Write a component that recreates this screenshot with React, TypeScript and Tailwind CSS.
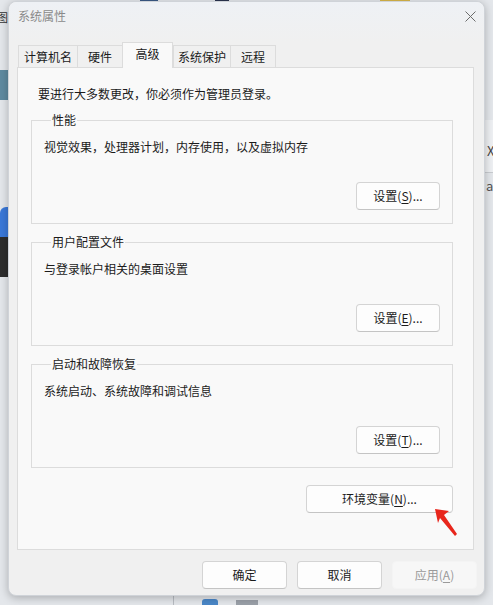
import type { ReactNode } from "react";

const font = {
  fontFamily: '"Noto Sans CJK SC", "Noto Sans", sans-serif',
};

const tabs = [
  { label: "计算机名", w: "w-[60px]" },
  { label: "硬件", w: "w-[46px]" },
  { label: "高级", w: "w-[51px]", active: true },
  { label: "系统保护", w: "w-[58px]" },
  { label: "远程", w: "w-[46px]" },
];

function Key({ k }: { k: string }) {
  return (
    <>
      (<span className="underline underline-offset-2">{k}</span>)
    </>
  );
}

function Btn({
  children,
  className = "",
  disabled = false,
}: {
  children: ReactNode;
  className?: string;
  disabled?: boolean;
}) {
  return (
    <button
      className={
        "h-[28px] rounded-[4px] text-[12px] leading-none " +
        (disabled
          ? "border border-[#f4f4f4] bg-[#f7f7f7] text-[#9a9a9a] "
          : "border border-[#d4d4d4] border-b-[#c4c4c4] bg-[#fdfdfd] text-[#1b1b1b] ") +
        className
      }
    >
      {children}
    </button>
  );
}

function Group({
  title,
  desc,
  children,
}: {
  title: string;
  desc: string;
  children: ReactNode;
}) {
  return (
    <fieldset className="ml-[13px] mr-[20px] h-[112px] border border-[#dcdcdc] pl-[12px] pr-[12px]">
      <legend className="ml-[7px] px-[1px] text-[12px] leading-[16px] text-[#1b1b1b]">
        {title}
      </legend>
      <p className="mt-[11px] text-[12px] leading-[16px] text-[#1b1b1b]">{desc}</p>
      <div className="mt-[27px] flex justify-end">{children}</div>
    </fieldset>
  );
}

export default function App() {
  return (
    <div
      className="relative h-[605px] w-[493px] overflow-hidden bg-[#e4e7eb]"
      style={font}
    >
      {/* desktop bits peeking out around the window */}
      <div className="absolute left-[140px] top-0 h-[4px] w-[18px] bg-[#3b5a86]" />
      <div className="absolute left-[215px] top-0 h-[4px] w-[14px] bg-[#2c3550]" />
      <div className="absolute left-[380px] top-0 h-[4px] w-[30px] bg-[#d9b64a]" />
      <div className="absolute left-0 top-[70px] h-[30px] w-[8px] bg-[#5f8aa0]" />
      <div className="absolute left-0 top-[207px] h-[30px] w-[8px] rounded-tl-[6px] bg-[#3a78d8]" />
      <div className="absolute left-0 top-[237px] h-[40px] w-[8px] bg-[#2d2d2d]" />
      <span className="absolute left-[-3px] top-[9px] text-[11px] text-[#333]">图</span>
      <div className="absolute left-[485px] top-[120px] h-[52px] w-[8px] bg-[#eef0f3]" />
      <div className="absolute left-[485px] top-[172px] h-px w-[8px] bg-[#c9ccd0]" />
      <span className="absolute left-[487px] top-[141px] text-[13px] text-[#444]">X</span>
      <span className="absolute left-[486px] top-[176px] text-[13px] text-[#555]">ac</span>
      <div className="absolute left-[173px] top-[596px] h-[10px] w-px bg-[#b8bcc2]" />
      <div className="absolute left-[202px] top-[599px] h-[6px] w-[16px] rounded-t-[3px] bg-[#4a87c8]" />
      <div className="absolute left-[236px] top-[600px] h-[5px] w-[22px] bg-[#9aa0a8]" />

      {/* 系统属性 window */}
      <div className="absolute left-[8px] top-[1px] flex h-[595px] w-[477px] flex-col rounded-[8px] border border-[#cfd3d8] bg-[#f0f0f0] pl-[8px] pr-[10px] shadow-[0_2px_8px_rgba(0,0,0,0.25)]">
        <div className="absolute inset-x-0 top-0 h-[40px] rounded-t-[8px] bg-gradient-to-b from-[#eef1f5] to-[#f0f0f0]" />
        <div className="relative flex h-[39px] items-start justify-between pt-[6px]">
          <span className="pl-[1px] text-[12px] leading-[16px] text-[#8a8a8a]">系统属性</span>
          <svg width="11" height="11" viewBox="0 0 11 11" className="mr-[-2px] mt-[3px]">
            <path d="M0.5 0.5 L10.5 10.5 M10.5 0.5 L0.5 10.5" stroke="#6b6b6b" strokeWidth="1" />
          </svg>
        </div>

        {/* tab strip */}
        <div className="relative z-10 ml-[1px] flex h-[26px] items-end">
          {tabs.map((t) =>
            t.active ? (
              <div
                key={t.label}
                className={`${t.w} -mb-px flex h-[26px] items-center justify-center border border-b-0 border-[#dcdcdc] bg-[#f9f9f9] pb-[4px] text-[12px] text-[#1b1b1b]`}
              >
                {t.label}
              </div>
            ) : (
              <div
                key={t.label}
                className={`${t.w} -mr-px flex h-[22px] items-center justify-center border border-b-0 border-[#dcdcdc] bg-[#f0f0f0] text-[12px] text-[#1b1b1b]`}
              >
                {t.label}
              </div>
            ),
          )}
        </div>

        {/* 高级 page */}
        <div className="flex h-[483px] flex-col border border-[#dcdcdc] bg-[#f9f9f9]">
          <p className="pl-[20px] pt-[18px] text-[12px] leading-[16px] text-[#1b1b1b]">
            要进行大多数更改，你必须作为管理员登录。
          </p>

          <div className="mt-[10px] flex flex-col gap-[10px]">
            <Group title="性能" desc="视觉效果，处理器计划，内存使用，以及虚拟内存">
              <Btn className="w-[84px]">
                设置<Key k="S" />...
              </Btn>
            </Group>
            <Group title="用户配置文件" desc="与登录帐户相关的桌面设置">
              <Btn className="w-[84px]">
                设置<Key k="E" />...
              </Btn>
            </Group>
            <Group title="启动和故障恢复" desc="系统启动、系统故障和调试信息">
              <Btn className="w-[84px]">
                设置<Key k="T" />...
              </Btn>
            </Group>
          </div>

          <div className="mr-[20px] mt-[17px] flex justify-end">
            <Btn className="w-[147px]">
              环境变量<Key k="N" />...
            </Btn>
          </div>
        </div>

        {/* dialog buttons */}
        <div className="mr-[-3px] mt-[11px] flex justify-end gap-[10px]">
          <Btn className="w-[85px]">确定</Btn>
          <Btn className="w-[85px]">取消</Btn>
          <Btn className="w-[85px]" disabled>
            应用<Key k="A" />
          </Btn>
        </div>
      </div>

      {/* red pointer arrow */}
      <svg
        className="absolute left-0 top-0"
        width="493"
        height="605"
        viewBox="0 0 493 605"
      >
        <polygon
          points="435,509 449,511 444,515 457,534 455,536 440,518 438,523"
          fill="#e8261c"
        />
      </svg>
    </div>
  );
}
